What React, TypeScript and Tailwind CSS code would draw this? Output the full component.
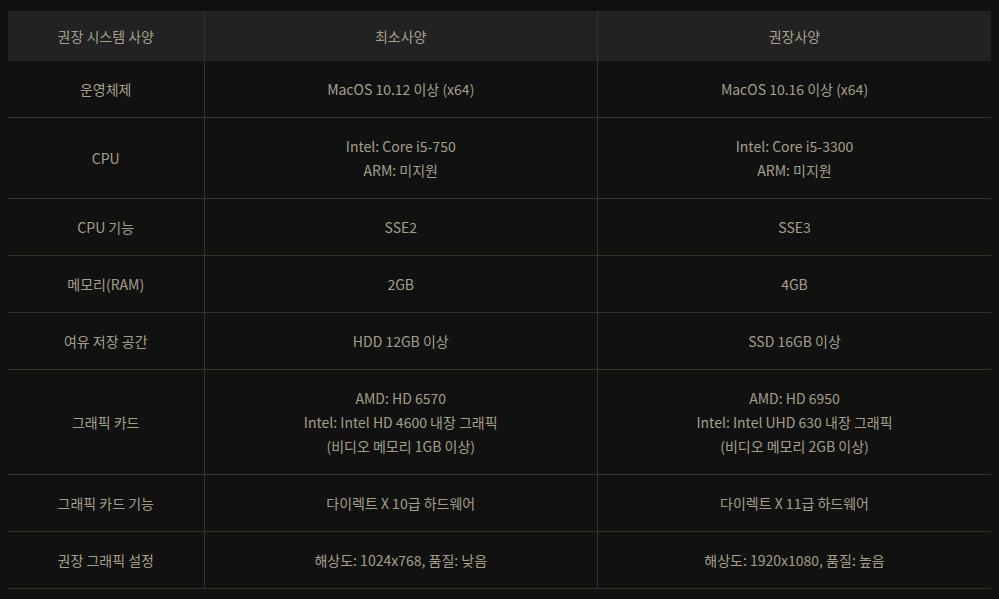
const rows: { label: string; min: string[]; rec: string[] }[] = [
  { label: '운영체제', min: ['MacOS 10.12 이상 (x64)'], rec: ['MacOS 10.16 이상 (x64)'] },
  { label: 'CPU', min: ['Intel: Core i5-750', 'ARM: 미지원'], rec: ['Intel: Core i5-3300', 'ARM: 미지원'] },
  { label: 'CPU 기능', min: ['SSE2'], rec: ['SSE3'] },
  { label: '메모리(RAM)', min: ['2GB'], rec: ['4GB'] },
  { label: '여유 저장 공간', min: ['HDD 12GB 이상'], rec: ['SSD 16GB 이상'] },
  {
    label: '그래픽 카드',
    min: ['AMD: HD 6570', 'Intel: Intel HD 4600 내장 그래픽', '(비디오 메모리 1GB 이상)'],
    rec: ['AMD: HD 6950', 'Intel: Intel UHD 630 내장 그래픽', '(비디오 메모리 2GB 이상)'],
  },
  { label: '그래픽 카드 기능', min: ['다이렉트 X 10급 하드웨어'], rec: ['다이렉트 X 11급 하드웨어'] },
  { label: '권장 그래픽 설정', min: ['해상도: 1024x768, 품질: 낮음'], rec: ['해상도: 1920x1080, 품질: 높음'] },
];

const Cell = ({ lines, first }: { lines: string[]; first?: boolean }) => (
  <td className={`border-b border-[#3b3123] py-4 text-center align-middle ${first ? '' : 'border-l'}`}>
    {lines.map((l) => (
      <div key={l}>{l}</div>
    ))}
  </td>
);

const App = () => {
  return (
    <div className="min-h-screen bg-[#111111] px-2 pt-[11px] font-['Noto_Sans_CJK_KR',sans-serif] text-[14px] leading-6 text-[#a49f8b]">
      <table className="w-full table-fixed border-collapse">
        <colgroup>
          <col className="w-[196px]" />
          <col />
          <col />
        </colgroup>
        <thead>
          <tr className="h-[50px] bg-[#222222]">
            <th className="font-normal">권장 시스템 사양</th>
            <th className="border-l border-[#3b3123] font-normal">최소사양</th>
            <th className="border-l border-[#3b3123] font-normal">권장사양</th>
          </tr>
        </thead>
        <tbody>
          {rows.map((r) => (
            <tr key={r.label}>
              <Cell lines={[r.label]} first />
              <Cell lines={r.min} />
              <Cell lines={r.rec} />
            </tr>
          ))}
        </tbody>
      </table>
    </div>
  );
};

export default App;
